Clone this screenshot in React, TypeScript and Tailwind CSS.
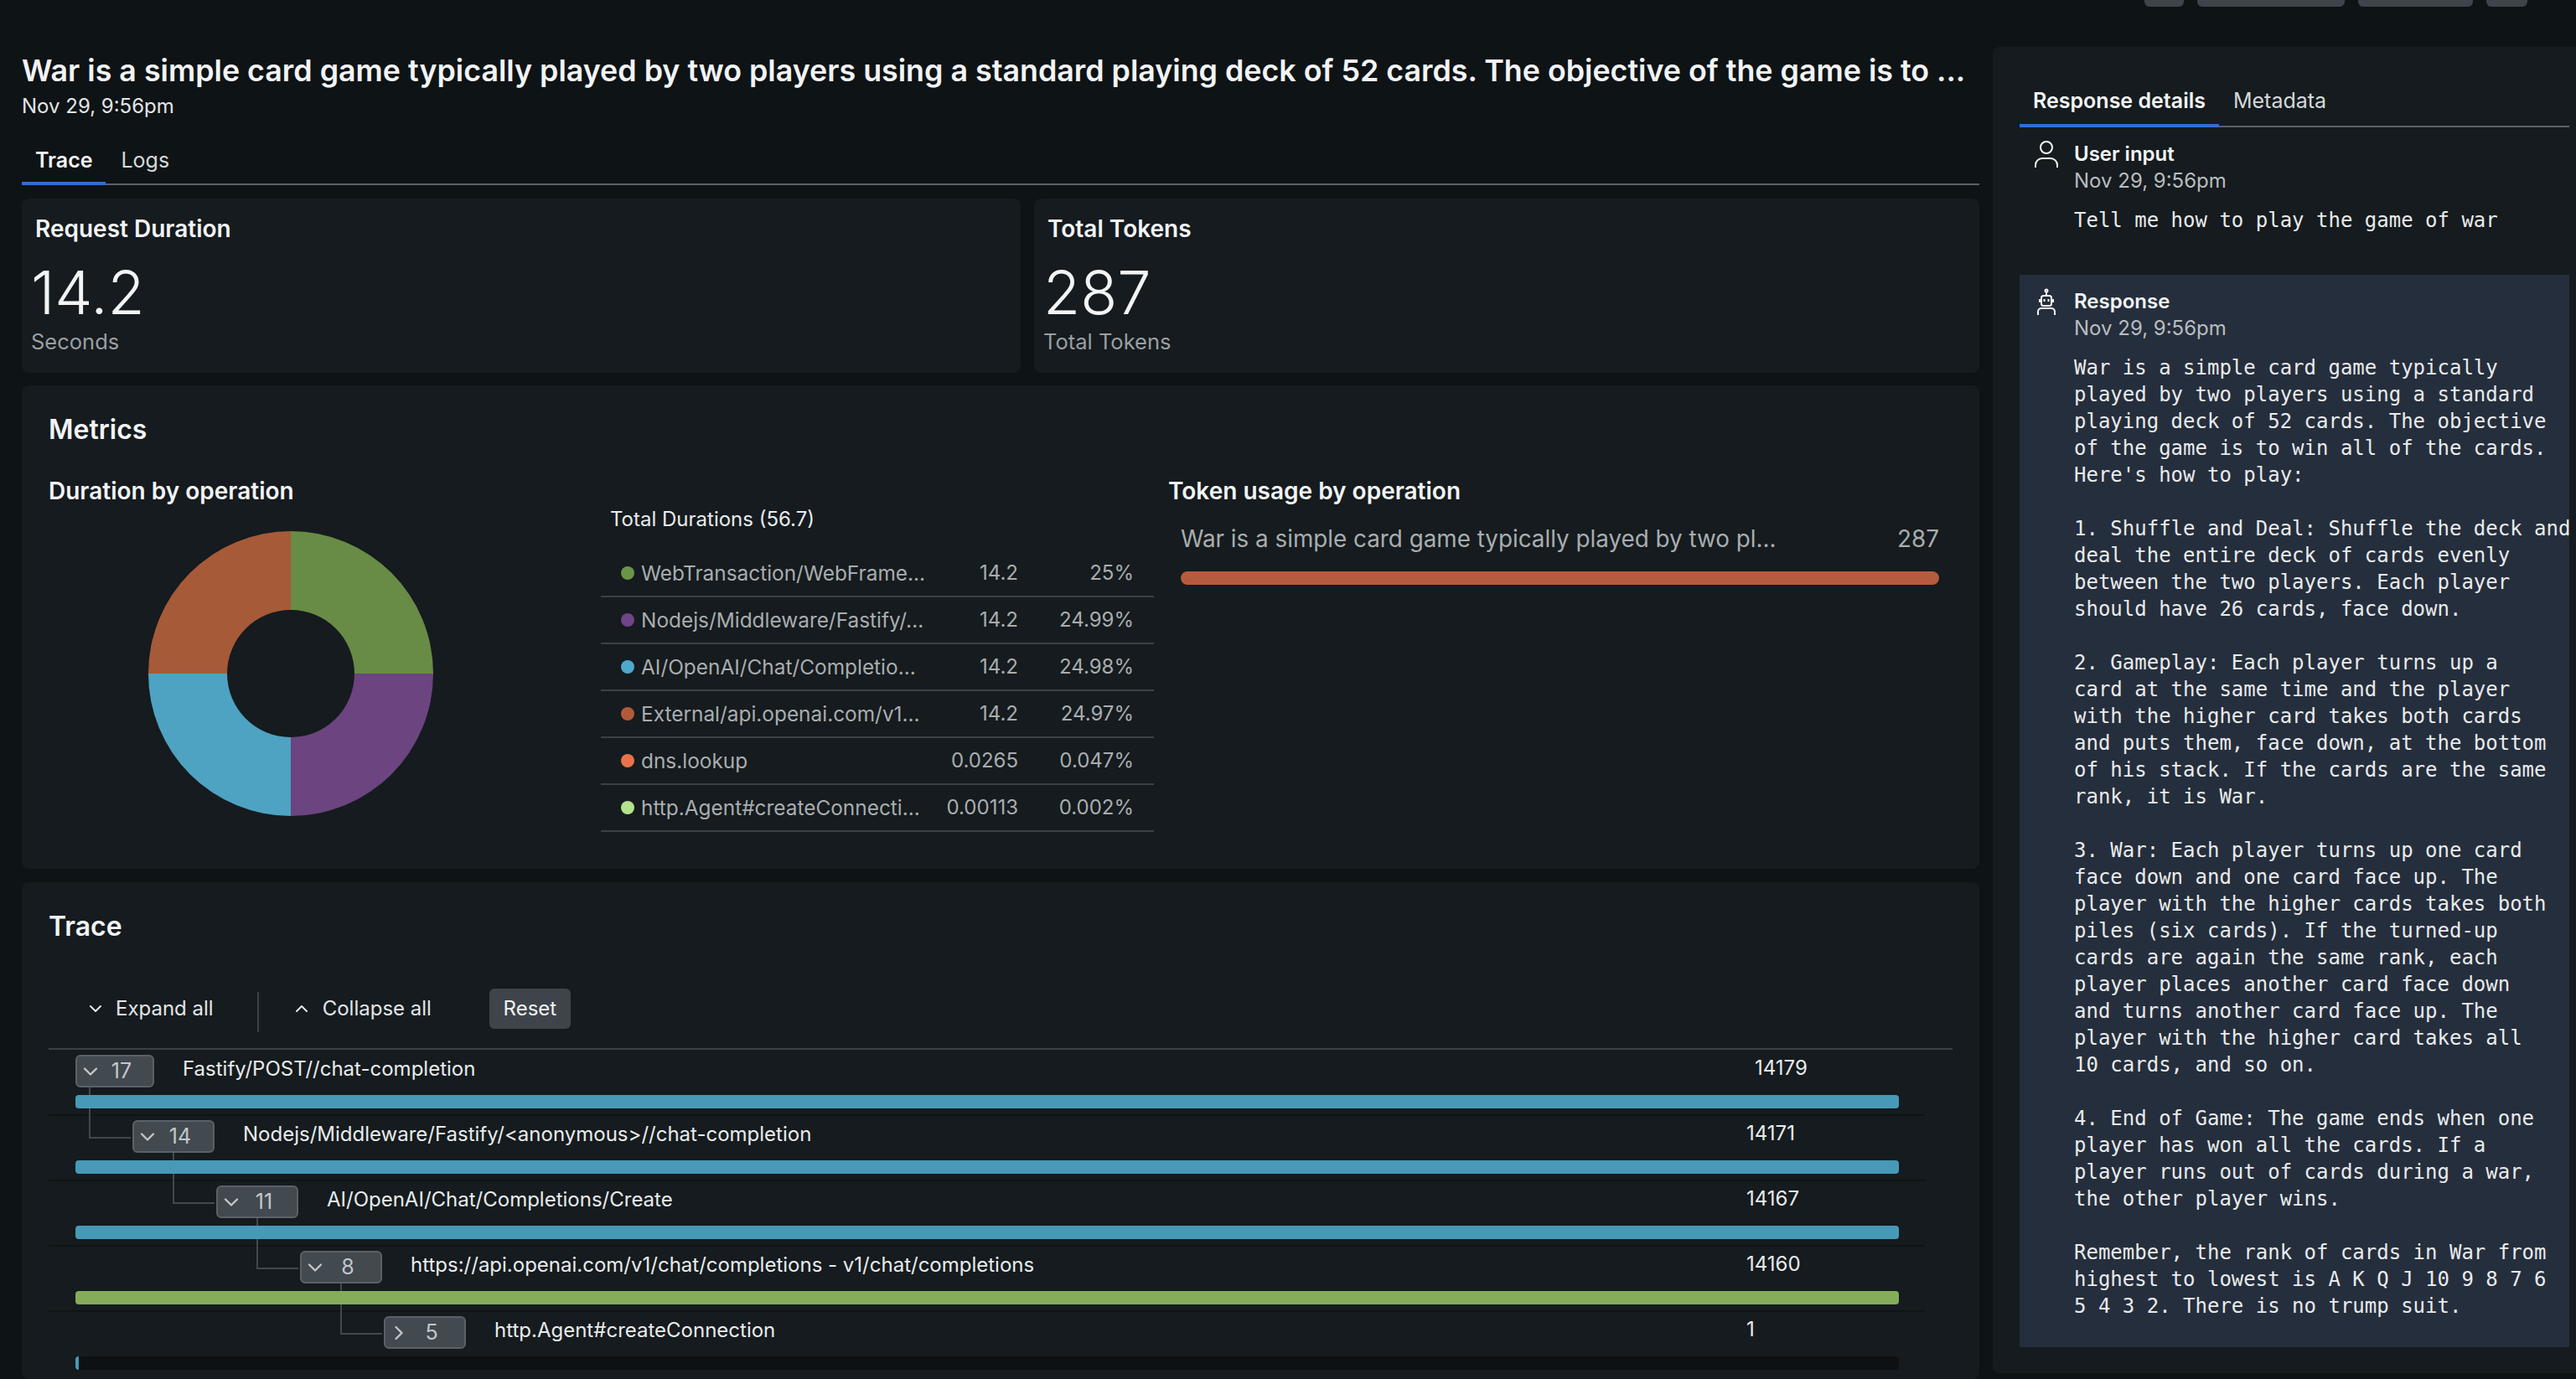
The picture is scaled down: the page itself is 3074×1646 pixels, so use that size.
import { ChevronDown, ChevronRight, ChevronUp } from 'lucide-react';

const RESPONSE_TEXT = `War is a simple card game typically
played by two players using a standard
playing deck of 52 cards. The objective
of the game is to win all of the cards.
Here's how to play:

1. Shuffle and Deal: Shuffle the deck and
deal the entire deck of cards evenly
between the two players. Each player
should have 26 cards, face down.

2. Gameplay: Each player turns up a
card at the same time and the player
with the higher card takes both cards
and puts them, face down, at the bottom
of his stack. If the cards are the same
rank, it is War.

3. War: Each player turns up one card
face down and one card face up. The
player with the higher cards takes both
piles (six cards). If the turned-up
cards are again the same rank, each
player places another card face down
and turns another card face up. The
player with the higher card takes all
10 cards, and so on.

4. End of Game: The game ends when one
player has won all the cards. If a
player runs out of cards during a war,
the other player wins.

Remember, the rank of cards in War from
highest to lowest is A K Q J 10 9 8 7 6
5 4 3 2. There is no trump suit.`;

const durations = [
  { name: 'WebTransaction/WebFrame...', value: '14.2', pct: '25%', dot: 'bg-[#6c9448]' },
  { name: 'Nodejs/Middleware/Fastify/...', value: '14.2', pct: '24.99%', dot: 'bg-[#6f4587]' },
  { name: 'AI/OpenAI/Chat/Completio...', value: '14.2', pct: '24.98%', dot: 'bg-[#4ea8cc]' },
  { name: 'External/api.openai.com/v1...', value: '14.2', pct: '24.97%', dot: 'bg-[#b05a3a]' },
  { name: 'dns.lookup', value: '0.0265', pct: '0.047%', dot: 'bg-[#e8734a]' },
  { name: 'http.Agent#createConnecti...', value: '0.00113', pct: '0.002%', dot: 'bg-[#b4e28a]' },
];

const spans = [
  { depth: 0, count: 17, name: 'Fastify/POST//chat-completion', ms: '14179', bar: 'bg-[#4799b8]', open: true },
  { depth: 1, count: 14, name: 'Nodejs/Middleware/Fastify/<anonymous>//chat-completion', ms: '14171', bar: 'bg-[#4799b8]', open: true },
  { depth: 2, count: 11, name: 'AI/OpenAI/Chat/Completions/Create', ms: '14167', bar: 'bg-[#4799b8]', open: true },
  { depth: 3, count: 8, name: 'https://api.openai.com/v1/chat/completions - v1/chat/completions', ms: '14160', bar: 'bg-[#84ad5a]', open: true },
  { depth: 4, count: 5, name: 'http.Agent#createConnection', ms: '1', bar: '', open: false },
];

const StatCard = ({ title, value, unit, className }: { title: string; value: string; unit: string; className: string }) => (
  <div className={`h-[208px] rounded-lg bg-[#151b1e] pl-[11px] pt-[18px] ${className}`}>
    <h3 className="pl-[5px] text-[28px] leading-[36px] font-semibold text-[#f2f4f5]">{title}</h3>
    <div className="mt-[18px] text-[72px] leading-[80px] font-light text-[#f2f4f5]">{value}</div>
    <div className="mt-[3px] text-[25.5px] leading-[32px] text-[#9a9fa3]">{unit}</div>
  </div>
);

const Donut = () => (
  <svg width="340" height="340" viewBox="-170 -170 340 340" className="mt-[30px] ml-[119px]">
    <path d="M0 -170 A170 170 0 0 1 170 0 L76 0 A76 76 0 0 0 0 -76 Z" fill="#688b46" />
    <path d="M170 0 A170 170 0 0 1 0 170 L0 76 A76 76 0 0 0 76 0 Z" fill="#6b4480" />
    <path d="M0 170 A170 170 0 0 1 -170 0 L-76 0 A76 76 0 0 0 0 76 Z" fill="#4ea3c2" />
    <path d="M-170 0 A170 170 0 0 1 0 -170 L0 -76 A76 76 0 0 0 -76 0 Z" fill="#a65a38" />
  </svg>
);

const UserIcon = () => (
  <svg width="28" height="32" viewBox="0 0 28 32" fill="none" stroke="currentColor" strokeWidth="2" className="shrink-0 text-[#f2f4f5]">
    <circle cx="14" cy="8" r="7" />
    <path d="M1 32v-3a8 8 0 0 1 8-8h10a8 8 0 0 1 8 8v3" />
  </svg>
);

const BotIcon = () => (
  <svg width="28" height="32" viewBox="0 0 28 32" fill="none" stroke="currentColor" strokeWidth="2" className="shrink-0 text-[#f2f4f5]">
    <circle cx="14" cy="3" r="1.5" />
    <path d="M14 4.5V9" />
    <rect x="8" y="9" width="12" height="12" rx="2.5" />
    <path d="M11.5 13v3M16.5 13v3M6 13v4M22 13v4" />
    <path d="M4 32v-4a4 4 0 0 1 4-4h12a4 4 0 0 1 4 4v4" />
  </svg>
);

const SpanRow = ({ span, last }: { span: (typeof spans)[number]; last: boolean }) => {
  const nodeLeft = span.depth === 0 ? 'ml-[32px]' : span.depth === 1 ? 'ml-[100px]' : span.depth === 2 ? 'ml-[200px]' : span.depth === 3 ? 'ml-[300px]' : 'ml-[400px]';
  const connector = span.depth === 1 ? 'left-[48px]' : span.depth === 2 ? 'left-[148px]' : span.depth === 3 ? 'left-[248px]' : 'left-[348px]';
  const Chevron = span.open ? ChevronDown : ChevronRight;

  return (
    <div className={`relative w-[2240px] pt-[5px] pb-[7px] ${last ? '' : 'border-b-2 border-[#0f1416]'}`}>
      {span.depth > 0 && (
        <div className={`absolute top-[-34px] h-[61px] w-[50px] border-b-2 border-l-2 border-[#42484d] ${connector}`} />
      )}
      <div className="relative flex h-[39px] items-center">
        <div className={`flex h-[39px] items-center rounded-md border-2 border-[#5a6168] bg-[#42494f] text-[#c3c7ca] ${nodeLeft} ${span.depth === 0 ? 'w-[94px]' : 'w-[98px]'}`}>
          <Chevron size={28} strokeWidth={2} className="ml-[2px] shrink-0" />
          <span className="flex-1 pr-[14px] text-center text-[25px] leading-none">{span.count}</span>
        </div>
        <span className="ml-[34px] -translate-y-[3px] text-[24px] leading-[32px] text-[#e9ebec]">{span.name}</span>
        <span className={`absolute top-0 text-[24px] leading-[32px] text-[#e9ebec] ${span.depth === 0 ? 'left-[2036px]' : 'left-[2026px]'}`}>{span.ms}</span>
      </div>
      <div className={`relative z-10 mt-[9px] ml-[32px] h-[16px] w-[2176px] overflow-hidden rounded-[4px] ${span.bar || 'bg-[#0d1113]'}`}>
        {!span.bar && <div className="h-full w-[4px] bg-[#4799b8]" />}
      </div>
    </div>
  );
};

const App = () => {
  return (
    <div className="flex h-[1646px] w-[3074px] flex-col overflow-hidden bg-[#0e1315] font-['Inter',sans-serif] text-[#f2f4f5]">
      <div className="flex h-[8px] shrink-0 justify-end gap-[16px] pr-[58px]">
        <div className="h-full w-[47px] rounded-b-md bg-[#3e444a]" />
        <div className="h-full w-[176px] rounded-b-md bg-[#3e444a]" />
        <div className="h-full w-[137px] rounded-b-md bg-[#3e444a]" />
        <div className="h-full w-[49px] rounded-b-md bg-[#3e444a]" />
      </div>
      <div className="flex min-h-0 flex-1 gap-[16px] pl-[26px]">
        {/* left column */}
        <div className="flex w-[2336px] shrink-0 flex-col">
          <h1 className="mt-[54px] truncate text-[35.8px] leading-[44px] font-semibold text-[#f2f4f5]">
            War is a simple card game typically played by two players using a standard playing deck of 52 cards. The objective of the game is to ...
          </h1>
          <p className="mt-[5px] text-[24px] leading-[32px] text-[#e3e5e7]">Nov 29, 9:56pm</p>
          <div className="mt-[15px] flex h-[63px] border-b-2 border-[#5c6166] text-[25px]">
            <div className="-mb-[2px] h-[63px] border-b-4 border-[#2f6fd6] px-[16px] pt-[15px] font-semibold">Trace</div>
            <div className="px-[18px] pt-[15px] text-[#d5d8da]">Logs</div>
          </div>
          <div className="mt-[16px] flex gap-[16px]">
            <StatCard title="Request Duration" value="14.2" unit="Seconds" className="w-[1192px]" />
            <StatCard title="Total Tokens" value="287" unit="Total Tokens" className="flex-1" />
          </div>
          <section className="mt-[15px] h-[577px] rounded-lg bg-[#151b1e] pt-[31px] pl-[32px]">
            <h2 className="text-[32px] leading-[44px] font-semibold">Metrics</h2>
            <div className="mt-[33px] flex">
              <div className="w-[659px]">
                <h3 className="text-[28px] leading-[36px] font-semibold">Duration by operation</h3>
                <Donut />
              </div>
              <div className="w-[677px] pt-[36px]">
                <div className="pl-[11px] text-[24px] leading-[32px] text-[#e9ebec]">Total Durations (56.7)</div>
                <div className="mt-[21px] w-[660px]">
                  {durations.map((row) => (
                    <div key={row.name} className="flex h-[56px] items-center border-b-2 border-[#3c4146] pl-[24px] pr-[24px] text-[24px] text-[#a9adb0]">
                      <span className={`mr-[8px] h-[16px] w-[16px] shrink-0 rounded-full ${row.dot}`} />
                      <span className="w-[360px] truncate text-[24.4px]">{row.name}</span>
                      <span className="w-[90px] text-right">{row.value}</span>
                      <span className="flex-1 text-right">{row.pct}</span>
                    </div>
                  ))}
                </div>
              </div>
              <div className="w-[940px]">
                <h3 className="text-[28px] leading-[36px] font-semibold">Token usage by operation</h3>
                <div className="mt-[21px] flex w-[920px] justify-between pl-[15px] text-[27.8px] leading-[36px] text-[#a9adb0]">
                  <span>War is a simple card game typically played by two pl...</span>
                  <span>287</span>
                </div>
                <div className="mt-[21px] ml-[15px] h-[16px] w-[905px] rounded-full bg-[#b55c3e]" />
              </div>
            </div>
          </section>
          <section className="mt-[16px] min-h-0 flex-1 rounded-lg bg-[#151b1e] pt-[31px]">
            <h2 className="pl-[32px] text-[32px] leading-[44px] font-semibold">Trace</h2>
            <div className="mt-[52px] ml-[32px] flex h-[48px] w-[2272px] items-center text-[24px] text-[#e3e5e7]">
              <ChevronDown size={24} strokeWidth={2} className="ml-[44px]" />
              <span className="ml-[12px]">Expand all</span>
              <div className="ml-[52px] h-[48px] w-[2px] translate-y-[4px] bg-[#3c4146]" />
              <ChevronUp size={24} strokeWidth={2} className="ml-[39px]" />
              <span className="ml-[13px]">Collapse all</span>
              <div className="ml-[69px] flex h-[48px] w-[97px] items-center justify-center rounded-md bg-[#3e444a] text-[#f2f4f5]">Reset</div>
            </div>
            <div className="mt-[23px] ml-[32px] w-[2272px] border-t-2 border-[#3c4146] pt-[1px]">
              {spans.map((span, i) => (
                <SpanRow key={span.name} span={span} last={i === spans.length - 1} />
              ))}
            </div>
          </section>
        </div>
        {/* right panel */}
        <aside className="mt-[48px] mb-[7px] min-w-0 flex-1 rounded-l-lg bg-[#151b1e] pl-[32px] pr-[8px]">
          <div className="mt-[44px] flex h-[52px] border-b-2 border-[#5c6166] text-[25px]">
            <div className="-mb-[2px] h-[52px] border-b-4 border-[#2f6fd6] px-[16px] pt-[2px] font-semibold">Response details</div>
            <div className="px-[17px] pt-[2px] text-[#d5d8da]">Metadata</div>
          </div>
          <div className="flex h-[176px] pl-[18px] pt-[16px]">
            <UserIcon />
            <div className="ml-[19px]">
              <div className="text-[24px] leading-[32px] font-semibold">User input</div>
              <div className="text-[24px] leading-[32px] text-[#b9bdc0]">Nov 29, 9:56pm</div>
              <pre className="mt-[15px] font-['DejaVu_Sans_Mono',monospace] text-[24px] leading-[32px] text-[#e9ebec]">Tell me how to play the game of war</pre>
            </div>
          </div>
          <div className="flex h-[1280px] bg-[#252e3c] pl-[18px] pt-[16px]">
            <BotIcon />
            <div className="ml-[19px]">
              <div className="text-[24px] leading-[32px] font-semibold">Response</div>
              <div className="text-[24px] leading-[32px] text-[#b9bdc0]">Nov 29, 9:56pm</div>
              <pre className="mt-[15px] font-['DejaVu_Sans_Mono',monospace] text-[24px] leading-[32px] text-[#e9ebec] [font-variant-ligatures:common-ligatures] [font-feature-settings:'liga'_1] [text-rendering:optimizeLegibility]">{RESPONSE_TEXT}</pre>
            </div>
          </div>
        </aside>
      </div>
    </div>
  );
};

export default App;
